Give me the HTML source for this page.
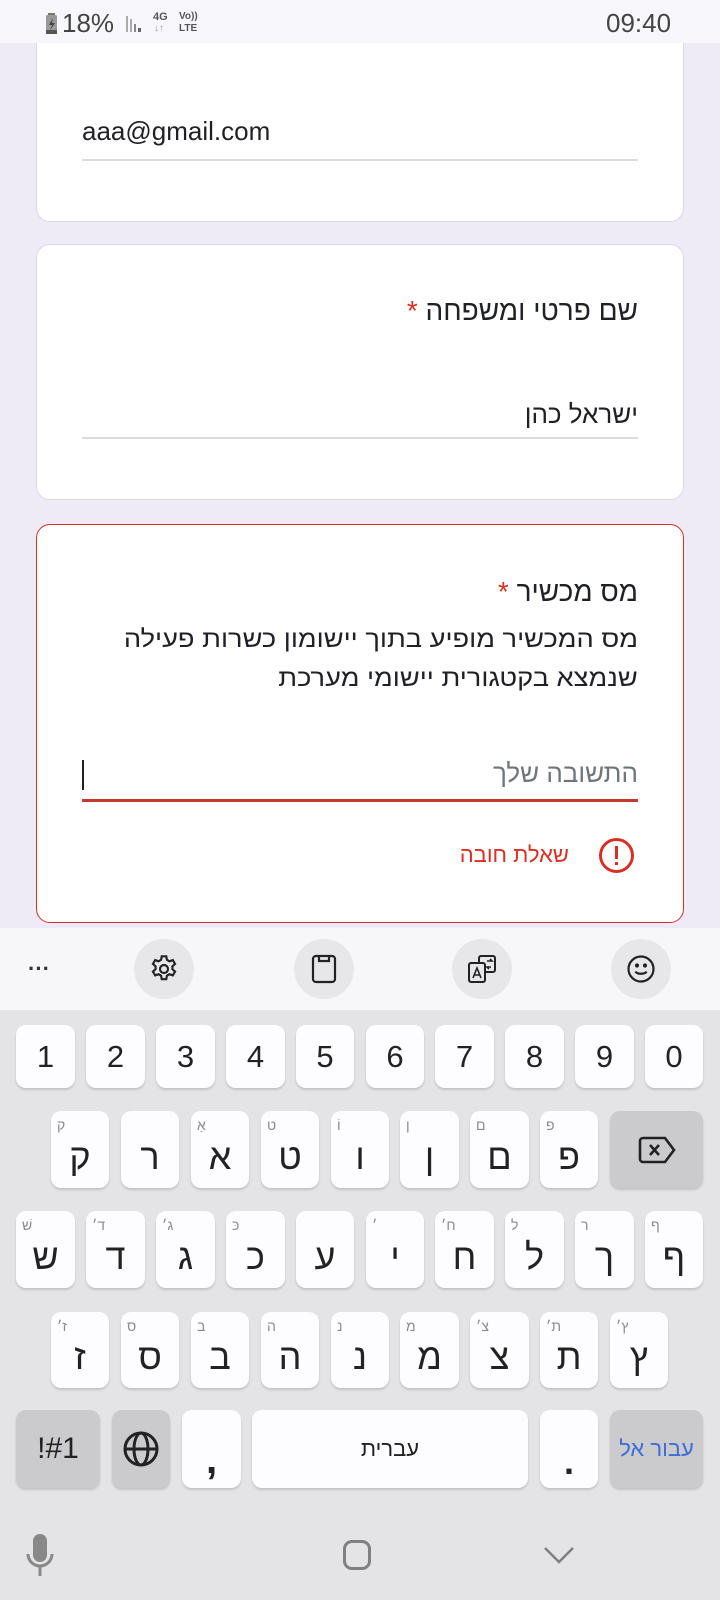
<!DOCTYPE html>
<html><head><meta charset="utf-8"><style>
*{margin:0;padding:0;box-sizing:border-box}
body{width:720px;height:1600px;position:relative;overflow:hidden;background:#eeeaf6;font-family:"Liberation Sans","DejaVu Sans",sans-serif;color:#202124}
.a{position:absolute;white-space:nowrap;line-height:1}
.card{position:absolute;left:36px;width:648px;background:#fff;border:1px solid #dadce0;border-radius:14px}
.k{position:absolute;background:#fdfdff;border-radius:10px;box-shadow:0 2px 2px rgba(0,0,0,.15);font-size:31px;color:#222;display:flex;align-items:center;justify-content:center}
.k.g{background:#cbcbcd}
.k .h{position:absolute;left:6px;top:6px;font-size:14px;color:#8a8a8a}
.k.l{font-size:36px;padding-top:14px}
.tb{position:absolute;width:60px;height:60px;border-radius:30px;background:#e7e7ea;top:939px}
.sx{transform:scaleX(1.135);transform-origin:right center}
</style></head><body>
<!-- card1 -->
<div class="card" style="top:20px;height:202px"></div>
<!-- status bar -->
<div class="a" style="left:0;top:0;width:720px;height:43px;background:#f8f8fc"></div>
<svg class="a" style="left:45px;top:13px" width="15" height="22" viewBox="0 0 15 22"><rect x="3" y="0" width="7" height="3" fill="#777"/><rect x="1" y="2" width="11" height="19" rx="1.5" fill="#999"/><rect x="1" y="17" width="11" height="4" fill="#555"/><path d="M8 5 L4 12 H7 L5 17 L10 10 H7 Z" fill="#444"/></svg>
<div class="a" style="left:62px;top:10px;font-size:26px;color:#444">18%</div>
<svg class="a" style="left:125px;top:14px" width="20" height="20"><rect x="1" y="2" width="2" height="16" fill="#aaa"/><rect x="5" y="5" width="2" height="13" fill="#aaa"/><rect x="9" y="10" width="2" height="8" fill="#888"/><rect x="13" y="14" width="3" height="4" fill="#666"/></svg>
<div class="a" style="left:153px;top:12px;font-size:11px;font-weight:bold;color:#555">4G</div>
<div class="a" style="left:154px;top:24px;font-size:10px;color:#999">↓↑</div>
<div class="a" style="left:179px;top:12px;font-size:10px;font-weight:bold;color:#555">Vo))</div>
<div class="a" style="left:179px;top:24px;font-size:10px;font-weight:bold;color:#555">LTE</div>
<div class="a" style="left:606px;top:10px;font-size:26px;color:#444">09:40</div>

<div class="a" style="left:82px;top:118px;font-size:26px">aaa@gmail.com</div>
<div class="a" style="left:82px;top:159px;width:556px;height:2px;background:#dadce0"></div>
<!-- card2 -->
<div class="card" style="top:244px;height:256px"></div>
<div class="a" style="right:82px;top:297px;font-size:28px;direction:rtl">שם פרטי ומשפחה <span style="color:#d93025">*</span></div>
<div class="a" style="right:82px;top:401px;font-size:26px;direction:rtl">ישראל כהן</div>
<div class="a" style="left:82px;top:437px;width:556px;height:2px;background:#dadce0"></div>
<!-- card3 -->
<div class="card" style="top:524px;height:399px;border-color:#d93025"></div>
<div class="a" style="right:82px;top:578px;font-size:28px;direction:rtl">מס מכשיר <span style="color:#d93025">*</span></div>
<div class="a sx" style="right:82px;top:628px;font-size:24px;direction:rtl">מס המכשיר מופיע בתוך יישומון כשרות פעילה</div>
<div class="a sx" style="right:82px;top:667px;font-size:24px;direction:rtl">שנמצא בקטגורית יישומי מערכת</div>
<div class="a" style="right:82px;top:760px;font-size:26px;direction:rtl;color:#70757a">התשובה שלך</div>
<div class="a" style="left:82px;top:760px;width:2px;height:30px;background:#222"></div>
<div class="a" style="left:82px;top:799px;width:556px;height:3px;background:#c5392c"></div>
<svg class="a" style="left:598px;top:837px" width="37" height="37" viewBox="0 0 37 37"><circle cx="18.5" cy="18.5" r="16" fill="none" stroke="#d93025" stroke-width="3"/><rect x="17" y="9" width="3" height="13" fill="#d93025"/><rect x="17" y="25" width="3" height="3" fill="#d93025"/></svg>
<div class="a" style="right:151px;top:844px;font-size:22px;direction:rtl;color:#d93025">שאלת חובה</div>
<!-- toolbar -->
<div class="a" style="left:0;top:928px;width:720px;height:82px;background:#f7f7f9"></div>
<div class="a" style="left:28px;top:958px;font-size:22px;color:#333;font-weight:bold">···</div>
<div class="tb" style="left:134px"></div><div class="tb" style="left:294px"></div><div class="tb" style="left:452px"></div><div class="tb" style="left:611px"></div>
<svg class="a" style="left:148px;top:953px" width="32" height="32" viewBox="0 0 24 24" fill="none" stroke="#222" stroke-width="1.6"><circle cx="12" cy="12" r="3"/><path d="M10.3 2.5h3.4l.5 2.6 1.9 1.1 2.5-.9 1.7 2.9-2 1.8v2.1l2 1.8-1.7 2.9-2.5-.9-1.9 1.1-.5 2.6h-3.4l-.5-2.6-1.9-1.1-2.5.9-1.7-2.9 2-1.8v-2.1l-2-1.8 1.7-2.9 2.5.9 1.9-1.1z"/></svg>
<svg class="a" style="left:310px;top:954px" width="28" height="30" viewBox="0 0 28 30" fill="none" stroke="#222" stroke-width="2.2"><rect x="3" y="2" width="22" height="26" rx="3"/><path d="M9 2v5h10V2"/></svg>
<svg class="a" style="left:467px;top:954px" width="30" height="30" viewBox="0 0 30 30" fill="none" stroke="#222" stroke-width="2"><rect x="2" y="9" width="16" height="19" rx="2"/><path d="M12 9V4a2 2 0 0 1 2-2h12a2 2 0 0 1 2 2v12a2 2 0 0 1-2 2h-8"/><path d="M6 24l4-10 4 10M7.5 21h5" stroke-width="1.6"/><path d="M20 7h5l-2-2M24 13h-4l2 2" stroke-width="1.6"/></svg>
<svg class="a" style="left:626px;top:954px" width="30" height="30" viewBox="0 0 30 30" fill="none" stroke="#222" stroke-width="2.2"><circle cx="15" cy="15" r="12.5"/><path d="M9.5 17.5c1.5 3 9.5 3 11 0"/><circle cx="11" cy="11.5" r="1" fill="#222"/><circle cx="19" cy="11.5" r="1" fill="#222"/></svg>
<!-- keyboard -->
<div class="a" style="left:0;top:1010px;width:720px;height:590px;background:#e4e4e6"></div>
<div class="k" style="left:16px;top:1025px;width:59px;height:63px">1</div>
<div class="k" style="left:86px;top:1025px;width:59px;height:63px">2</div>
<div class="k" style="left:156px;top:1025px;width:59px;height:63px">3</div>
<div class="k" style="left:226px;top:1025px;width:59px;height:63px">4</div>
<div class="k" style="left:296px;top:1025px;width:58px;height:63px">5</div>
<div class="k" style="left:366px;top:1025px;width:58px;height:63px">6</div>
<div class="k" style="left:435px;top:1025px;width:59px;height:63px">7</div>
<div class="k" style="left:505px;top:1025px;width:59px;height:63px">8</div>
<div class="k" style="left:575px;top:1025px;width:59px;height:63px">9</div>
<div class="k" style="left:645px;top:1025px;width:58px;height:63px">0</div>

<div class="k l" style="left:51px;top:1111px;width:58px;height:77px"><span class="h">ק</span>ק</div>
<div class="k l" style="left:121px;top:1111px;width:58px;height:77px">ר</div>
<div class="k l" style="left:191px;top:1111px;width:58px;height:77px"><span class="h">אַ</span>א</div>
<div class="k l" style="left:261px;top:1111px;width:58px;height:77px"><span class="h">ט</span>ט</div>
<div class="k l" style="left:331px;top:1111px;width:58px;height:77px"><span class="h">וֹ</span>ו</div>
<div class="k l" style="left:400px;top:1111px;width:59px;height:77px"><span class="h">ן</span>ן</div>
<div class="k l" style="left:470px;top:1111px;width:59px;height:77px"><span class="h">ם</span>ם</div>
<div class="k l" style="left:540px;top:1111px;width:58px;height:77px"><span class="h">פ</span>פ</div>
<div class="k g" style="left:610px;top:1111px;width:93px;height:77px"><svg width="40" height="30" viewBox="0 0 40 30" fill="none" stroke="#222" stroke-width="2.6"><path d="M6 3h22l9 12-9 12H6a3 3 0 0 1-3-3V6a3 3 0 0 1 3-3z"/><path d="M13 10l9 10M22 10l-9 10"/></svg></div>

<div class="k l" style="left:16px;top:1211px;width:59px;height:77px"><span class="h">שׁ</span>ש</div>
<div class="k l" style="left:86px;top:1211px;width:59px;height:77px"><span class="h">ד׳</span>ד</div>
<div class="k l" style="left:156px;top:1211px;width:59px;height:77px"><span class="h">ג׳</span>ג</div>
<div class="k l" style="left:226px;top:1211px;width:59px;height:77px"><span class="h">כּ</span>כ</div>
<div class="k l" style="left:296px;top:1211px;width:58px;height:77px">ע</div>
<div class="k l" style="left:366px;top:1211px;width:58px;height:77px"><span class="h">׳</span>י</div>
<div class="k l" style="left:435px;top:1211px;width:59px;height:77px"><span class="h">ח׳</span>ח</div>
<div class="k l" style="left:505px;top:1211px;width:59px;height:77px"><span class="h">ל</span>ל</div>
<div class="k l" style="left:575px;top:1211px;width:59px;height:77px"><span class="h">ר</span>ך</div>
<div class="k l" style="left:645px;top:1211px;width:58px;height:77px"><span class="h">ף</span>ף</div>

<div class="k l" style="left:51px;top:1312px;width:58px;height:76px"><span class="h">ז׳</span>ז</div>
<div class="k l" style="left:121px;top:1312px;width:58px;height:76px"><span class="h">ס</span>ס</div>
<div class="k l" style="left:191px;top:1312px;width:58px;height:76px"><span class="h">ב</span>ב</div>
<div class="k l" style="left:261px;top:1312px;width:58px;height:76px"><span class="h">ה</span>ה</div>
<div class="k l" style="left:331px;top:1312px;width:58px;height:76px"><span class="h">נ</span>נ</div>
<div class="k l" style="left:400px;top:1312px;width:59px;height:76px"><span class="h">מ</span>מ</div>
<div class="k l" style="left:470px;top:1312px;width:59px;height:76px"><span class="h">צ׳</span>צ</div>
<div class="k l" style="left:540px;top:1312px;width:58px;height:76px"><span class="h">ת׳</span>ת</div>
<div class="k l" style="left:610px;top:1312px;width:58px;height:76px"><span class="h">ץ׳</span>ץ</div>

<div class="k g" style="left:16px;top:1410px;width:84px;height:78px;font-size:30px">!#1</div>
<div class="k g" style="left:112px;top:1410px;width:58px;height:78px"><svg width="38" height="38" viewBox="0 0 38 38" fill="none" stroke="#222" stroke-width="3"><circle cx="19" cy="19" r="16"/><ellipse cx="19" cy="19" rx="7" ry="16"/><path d="M3 19h32"/></svg></div>
<div class="k" style="left:182px;top:1410px;width:59px;height:78px;font-size:40px;font-weight:bold;padding-top:22px">,</div>
<div class="k" style="left:252px;top:1410px;width:276px;height:78px;font-size:22px;direction:rtl">עברית</div>
<div class="k" style="left:540px;top:1410px;width:58px;height:78px;font-size:36px;font-weight:bold;padding-top:26px">.</div>
<div class="k g" style="left:610px;top:1410px;width:93px;height:78px;font-size:22px;color:#3b6fd6;direction:rtl">עבור אל</div>
<!-- nav -->
<svg class="a" style="left:24px;top:1532px" width="32" height="48" viewBox="0 0 32 48"><rect x="9" y="2" width="14" height="28" rx="7" fill="#888"/><path d="M4 22a12 12 0 0 0 24 0" fill="none" stroke="#888" stroke-width="3"/><rect x="14.5" y="34" width="3" height="10" fill="#888"/></svg>
<div class="a" style="left:343px;top:1540px;width:28px;height:30px;border:3px solid #808080;border-radius:9px"></div>
<svg class="a" style="left:543px;top:1545px" width="32" height="20" viewBox="0 0 32 20"><path d="M2 3l14 14L30 3" fill="none" stroke="#808080" stroke-width="2.5"/></svg>
</body></html>
